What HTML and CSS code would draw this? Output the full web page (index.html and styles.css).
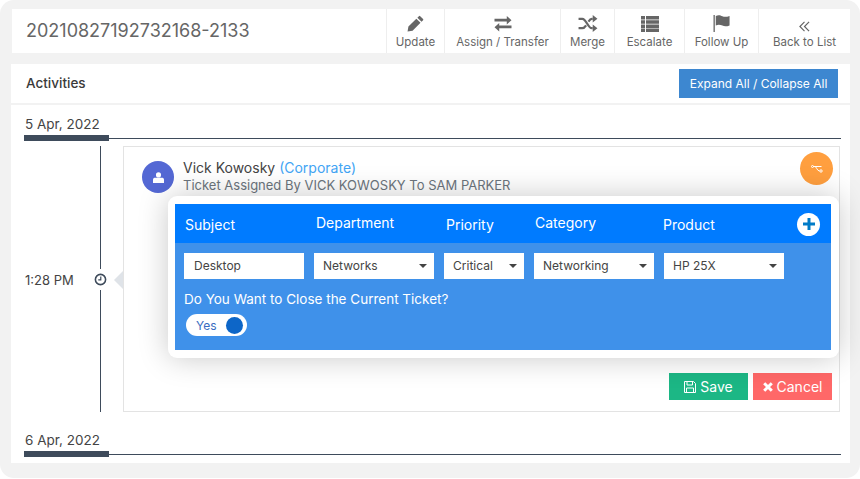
FILE: index.html
```html
<!DOCTYPE html>
<html lang="en">
<head>
  <meta charset="UTF-8" />
  <meta name="viewport" content="width=device-width, initial-scale=1.0"/>
  <title>Ticket 20210827192732168-2133</title>
  <link rel="stylesheet" href="styles.css">
</head>
<body>
  <div class="frame">
    <div class="ticket-bar">
      <h1 class="ticket-no">20210827192732168-2133</h1>
      <div class="tools">
        <div class="tool tool-update">
          <svg viewBox="0 0 18 18" width="17" height="17"><path fill="#666" d="M12.6 1.2a1 1 0 0 1 1.4 0l3 3a1 1 0 0 1 0 1.4l-1.6 1.6-4.4-4.4zM9.9 3.9l4.4 4.4-8.4 8.4L.6 17.6 1.5 12.3z"/></svg>
          <span>Update</span>
        </div>
        <div class="tool tool-assign">
          <svg viewBox="0 0 20 18" width="20" height="17"><path fill="#666" d="M1 4h13V1l5 4.5-5 4.5V7H1zM19 11H6V8.500L1 13l5 4.500V14h13z"/></svg>
          <span>Assign / Transfer</span>
        </div>
        <div class="tool tool-merge">
          <svg viewBox="0 0 20 18" width="20" height="17"><path fill="none" stroke="#666" stroke-width="2.400" d="M0 4h4c4 0 6 10 10 10h1M0 14h4c1.600 0 3-1.500 4-3M10.500 7c1-1.500 2-3 3.500-3h1"/><path fill="#666" d="M15 0l5 4-5 4zM15 10l5 4-5 4z"/></svg>
          <span>Merge</span>
        </div>
        <div class="tool tool-escalate">
          <svg viewBox="0 0 18 16" width="18" height="16"><path fill="#666" d="M0 0h4v3.500H0zM5 0h13v3.500H5zM0 4.200h4v3.500H0zM5 4.200h13v3.500H5zM0 8.400h4v3.500H0zM5 8.400h13v3.500H5zM0 12.500h4V16H0zM5 12.500h13V16H5z"/></svg>
          <span>Escalate</span>
        </div>
        <div class="tool tool-follow">
          <svg viewBox="0 0 18 18" width="18" height="17"><path fill="#666" d="M0 0h1.400v18H0zM2.400 1c3-1.500 5-.5 7 .3s4 1 7.600-.3v10c-3.600 1.400-5.600 1-7.600.2s-4-1.500-7-.2z"/></svg>
          <span>Follow Up</span>
        </div>
        <div class="tool tool-back">
          <svg viewBox="0 0 12 12" width="11" height="11"><path fill="none" stroke="#666" stroke-width="1.300" d="M6 1L1 6l5 5M11 1L6 6l5 5"/></svg>
          <span>Back to List</span>
        </div>
      </div>
    </div>

    <div class="panel">
      <div class="panel-head">
        <h2>Activities</h2>
        <button class="expand-btn">Expand All / Collapse All</button>
      </div>

      <div class="date-row">
        <span class="date-label">5 Apr, 2022</span>
        <div class="date-rule"></div>
      </div>

      <div class="activity">
        <div class="time-col">
          <span class="time">1:28 PM</span>
          <div class="axis">
            <div class="axis-line"></div>
            <svg class="clock" viewBox="0 0 14 14" width="13" height="13"><circle cx="7" cy="7" r="5.500" fill="none" stroke="#3e4b5b" stroke-width="1.700"/><path fill="none" stroke="#3e4b5b" stroke-width="1.300" d="M7.300 3.800v3.500H4.600"/></svg>
            <div class="axis-line"></div>
          </div>
        </div>
        <div class="card">
          <div class="card-arrow"></div>
          <div class="card-head">
            <div class="avatar">
              <svg viewBox="0 0 12 12" width="11" height="11"><circle cx="6" cy="3.200" r="2.800" fill="#fff"/><path fill="#fff" d="M0 12V8.500C0 7 1 6.300 2.500 6.300h7C11 6.300 12 7 12 8.500V12z"/></svg>
            </div>
            <div class="who">
              <div class="who-name">Vick Kowosky <a class="who-type">(Corporate)</a></div>
              <div class="who-note">Ticket Assigned By VICK KOWOSKY To SAM PARKER</div>
            </div>
            <div class="route-badge">
              <svg viewBox="0 0 12 8" width="12" height="8"><path fill="none" stroke="#fff" stroke-width="1" d="M2 1.500h8.500M4 1.500c1.500 0 2 4.500 4.500 4.500"/><circle cx="1.500" cy="1.500" r="1" fill="none" stroke="#fff"/><circle cx="10" cy="6" r="1.200" fill="none" stroke="#fff"/></svg>
            </div>
          </div>

          <div class="card-actions">
            <button class="btn btn-save">
              <svg viewBox="0 0 12 12" width="12" height="12"><path fill="none" stroke="#fff" stroke-width="1" d="M.5.500h9l2 2v9H.5zM3 .500v3.500h5.500V.500M2.500 11.500V7h7v4.500"/></svg>
              Save
            </button>
            <button class="btn btn-cancel">
              <svg viewBox="0 0 10 10" width="10" height="10"><path fill="none" stroke="#fff" stroke-width="3" d="M1.200 1.200l7.600 7.600M8.800 1.200L1.200 8.800"/></svg>
              Cancel
            </button>
          </div>

          <div class="modal">
            <div class="modal-head">
              <span class="col col-subject">Subject</span>
              <span class="col col-dept">Department</span>
              <span class="col col-priority">Priority</span>
              <span class="col col-category">Category</span>
              <span class="col col-product">Product</span>
              <span class="add-btn">
                <svg viewBox="0 0 12 12" width="12" height="12"><path fill="#007bc7" d="M4.500 0h3v4.500H12v3H7.500V12h-3V7.500H0v-3h4.500z"/></svg>
              </span>
            </div>
            <div class="modal-body">
              <div class="fields">
                <div class="field field-text">Desktop</div>
                <div class="field field-select w-120">Networks</div>
                <div class="field field-select w-80">Critical</div>
                <div class="field field-select w-120">Networking</div>
                <div class="field field-select w-120">HP 25X</div>
              </div>
              <div class="close-q">Do You Want to Close the Current Ticket?</div>
              <div class="toggle">
                <span>Yes</span>
                <i class="knob"></i>
              </div>
            </div>
          </div>
        </div>
      </div>

      <div class="date-row date-row-next">
        <span class="date-label">6 Apr, 2022</span>
        <div class="date-rule"></div>
      </div>
    </div>
  </div>
</body>
</html>
```

FILE: styles.css
```css
* {
  box-sizing: border-box;
}
body {
  margin: 0;
  background: #fff;
  font-family: Inter, "Open Sans", sans-serif;
  color: #444;
}
.frame {
  width: 860px;
  height: 478px;
  background: #f2f2f2;
  border-radius: 14px;
  padding: 9px 10px 0 11px;
  overflow: hidden;
}

/* top bar */
.ticket-bar {
  display: flex;
  justify-content: space-between;
  height: 44px;
  margin-left: 1px;
  background: #fff;
}
.ticket-no {
  margin: 0;
  padding: 11px 0 0 14px;
  font-size: 18px;
  font-weight: 400;
  line-height: 22px;
  color: #666;
}
.tools {
  display: flex;
}
.tool {
  display: flex;
  flex-direction: column;
  align-items: center;
  justify-content: flex-end;
  gap: 3px;
  padding-bottom: 4px;
  border-left: 1px solid #eee;
  font-size: 11.500px;
  line-height: 14px;
  color: #666;
  white-space: nowrap;
}
.tool-update { width: 58px; }
.tool-assign { width: 116px; }
.tool-merge { width: 54px; }
.tool-escalate { width: 70px; }
.tool-follow { width: 74px; }
.tool-back { width: 92px; }

/* activities */
.panel {
  height: 399px;
  margin-top: 11px;
  background: #fff;
}
.panel-head {
  display: flex;
  align-items: center;
  justify-content: space-between;
  height: 41px;
  padding: 0 12px 2px 15px;
  border-bottom: 2px solid #f2f2f2;
}
.panel-head h2 {
  margin: 0;
  font-size: 13.500px;
  font-weight: 500;
  color: #3a3a3a;
}
.expand-btn {
  width: 159px;
  height: 29px;
  margin-top: 2px;
  padding: 0;
  border: 0;
  background: #3d87d0;
  color: #fff;
  font-family: inherit;
  font-size: 12px;
}

.date-row {
  position: relative;
  height: 34px;
  padding: 10px 0 0 14px;
}
.date-label {
  display: block;
  font-size: 13.500px;
  line-height: 18px;
  color: #444;
}
.date-rule {
  position: absolute;
  left: 13px;
  right: 9px;
  top: 33px;
  height: 1px;
  background: #3e4b5b;
}
.date-rule::before {
  content: "";
  position: absolute;
  left: 0;
  top: -3px;
  width: 85px;
  height: 6px;
  background: #3e4b5b;
}
.date-row-next {
  margin-top: 9px;
}

.activity {
  display: flex;
  height: 266px;
  margin-top: 7px;
  margin-right: 10px;
}
.time-col {
  display: flex;
  width: 112px;
  flex: none;
  padding-left: 14px;
}
.time {
  width: 70px;
  margin-top: 125px;
  font-size: 13px;
  line-height: 18px;
  color: #444;
}
.axis {
  display: flex;
  flex-direction: column;
  align-items: center;
  width: 13px;
  margin-left: -1px;
}
.axis-line {
  flex: 1;
  width: 1px;
  background: #3e4b5b;
}
.clock {
  margin: 4px 0;
  flex: none;
}

/* card with the popup over it */
.card {
  position: relative;
  flex: 1;
  border: 1px solid #e3e3e3;
  padding: 14px 6px 0 18px;
  display: flex;
  flex-direction: column;
  justify-content: space-between;
}
.card-arrow {
  position: absolute;
  left: -10px;
  top: 124px;
  border-style: solid;
  border-width: 9px 9px 9px 0;
  border-color: transparent #dfe3e8 transparent transparent;
}
.card-head {
  display: flex;
  align-items: flex-start;
}
.avatar {
  display: flex;
  align-items: center;
  justify-content: center;
  flex: none;
  width: 32px;
  height: 32px;
  border-radius: 50%;
  background: #5468d4;
}
.who {
  flex: 1;
  padding-left: 9px;
  margin-top: -3px;
}
.who-name {
  font-size: 14px;
  line-height: 19px;
  color: #444;
}
.who-type {
  color: #42a5f5;
}
.who-note {
  font-size: 13px;
  line-height: 17px;
  color: #6c757d;
}
.route-badge {
  display: flex;
  align-items: center;
  justify-content: center;
  flex: none;
  width: 33px;
  height: 33px;
  margin-top: -9px;
  border-radius: 50%;
  background: #ff9f3f;
}
.card-actions {
  display: flex;
  justify-content: flex-end;
  gap: 5px;
  padding: 0 1px 11px 0;
}
.btn {
  display: flex;
  align-items: center;
  justify-content: center;
  gap: 4px;
  width: 79px;
  height: 27px;
  padding: 0;
  border: 0;
  color: #fff;
  font-family: inherit;
  font-size: 14px;
}
.btn-save { background: #1cb785; }
.btn-cancel { background: #ff6868; }

.modal {
  position: absolute;
  left: 44px;
  top: 49px;
  width: 671px;
  height: 162px;
  padding: 8px 8px 8px 7px;
  background: #fff;
  border-radius: 9px;
  box-shadow: 0 0 30px rgba(0, 0, 0, .22);
}
.modal-head {
  display: flex;
  align-items: center;
  height: 39px;
  background: #007bff;
  color: #fff;
  font-size: 14px;
}
.col {
  flex: none;
}
.col-subject { width: 141px; padding-left: 10px; padding-top: 1px; }
.col-dept { width: 130px; margin-top: -3px; }
.col-priority { width: 89px; padding-top: 1px; }
.col-category { width: 128px; margin-top: -2px; }
.col-product { width: 134px; padding-top: 2px; }
.add-btn {
  display: flex;
  align-items: center;
  justify-content: center;
  width: 23px;
  height: 23px;
  margin-top: 1px;
  border-radius: 50%;
  background: #fff;
}
.modal-body {
  height: 107px;
  padding: 10px 9px 0;
  background: #3f91ea;
}
.fields {
  display: flex;
  gap: 10px;
}
.field {
  height: 26px;
  background: #fff;
  font-size: 12px;
  line-height: 26px;
  color: #444;
}
.field-text {
  width: 120px;
  padding-left: 10px;
}
.field-select {
  position: relative;
  padding-left: 9px;
}
.field-select::after {
  content: "";
  position: absolute;
  right: 7px;
  top: 11px;
  border-style: solid;
  border-width: 4px 4px 0;
  border-color: #444 transparent transparent;
}
.w-120 { width: 120px; }
.w-80 { width: 80px; }
.close-q {
  margin-top: 11px;
  font-size: 13.500px;
  line-height: 18px;
  color: #fff;
}
.toggle {
  display: flex;
  align-items: center;
  justify-content: space-between;
  width: 61px;
  height: 22px;
  margin: 6px 0 0 2px;
  padding: 0 4px 0 10px;
  border-radius: 11px;
  background: #fff;
  font-size: 12px;
  color: #3a6cc0;
}
.knob {
  width: 17px;
  height: 17px;
  border-radius: 50%;
  background: #0d66c8;
}
```
